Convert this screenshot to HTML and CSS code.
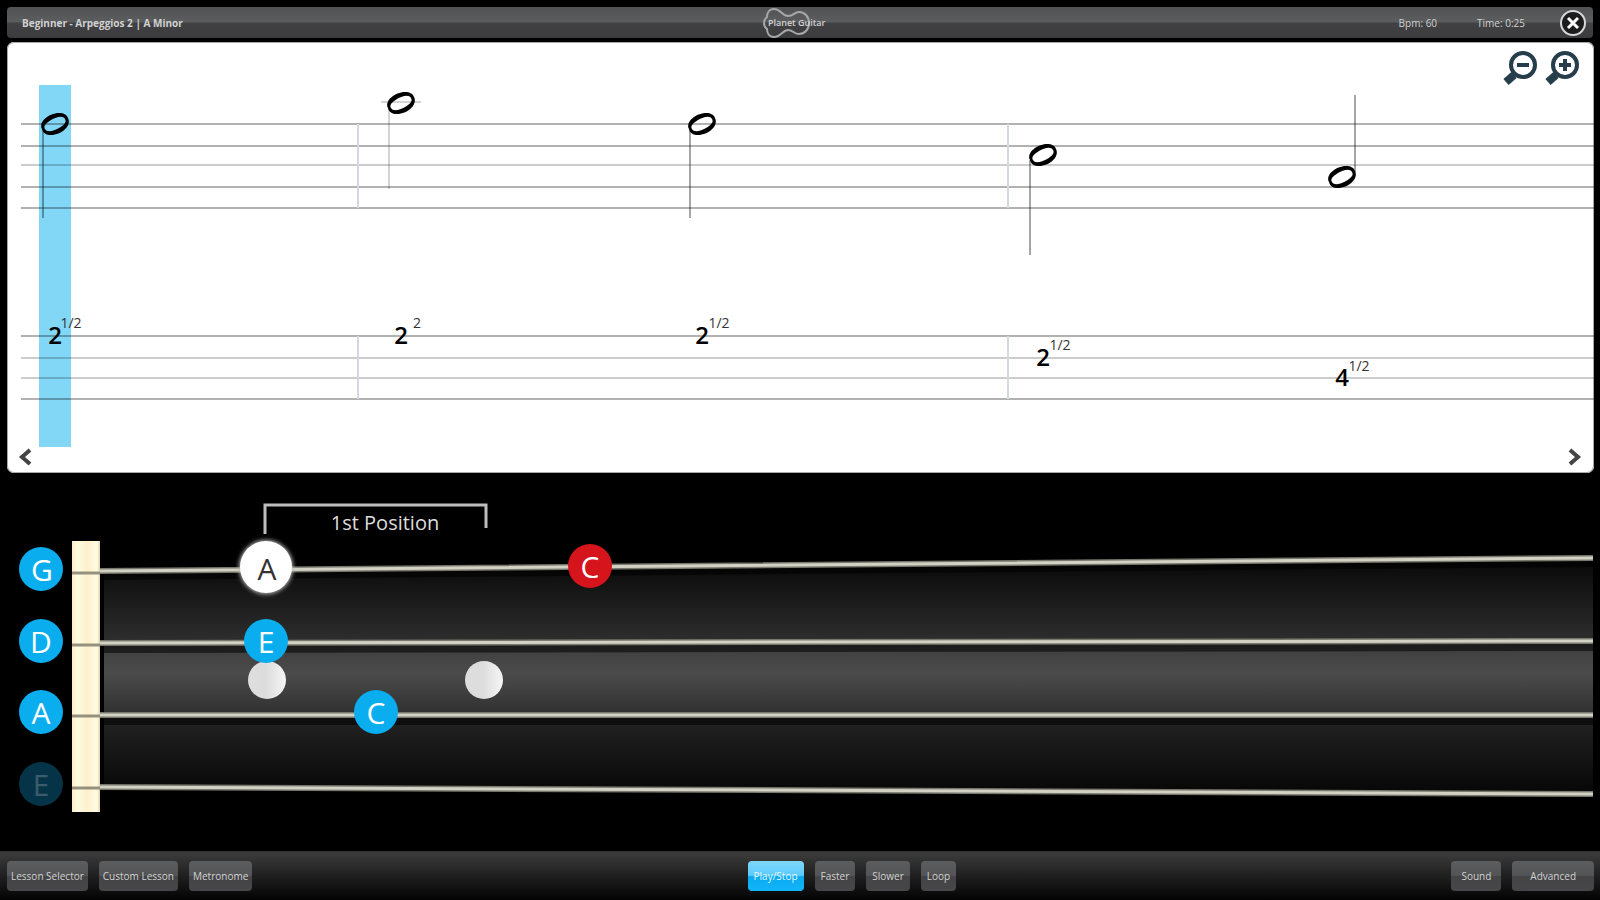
FILE: index.html
```html
<!DOCTYPE html>
<html lang="en">
<head>
<meta charset="utf-8">
<meta name="viewport" content="width=device-width, initial-scale=1">
<title>Arpeggios 2 | A Minor</title>
<link rel="stylesheet" href="styles.css">
</head>
<body>
<header class="topbar">
  <h1 class="title">Beginner - Arpeggios 2 | A Minor</h1>
  <div class="logo">
    <svg class="logo-body" viewBox="0 0 50 30" aria-hidden="true"><path d="M12 1C19 1 20 8 26 8S32 4 37 4C43 4 47 9 47 15S43 26 37 26C32 26 31 22 26 22S19 29 12 29C7 29 5 25 5 21C1 18 1 12 5 9C5 5 7 1 12 1Z"/></svg>
    <span class="logo-text">Planet Guitar</span>
  </div>
  <div class="status">
    <span>Bpm: 60</span>
    <span>Time: 0:25</span>
    <button class="close" type="button" aria-label="Close">
      <svg viewBox="0 0 28 28"><circle cx="14" cy="14" r="12"/><path d="M9 9L19 19M19 9L9 19"/></svg>
    </button>
  </div>
</header>

<main>
  <section class="score" aria-label="Score">
    <svg class="sheet" viewBox="7 42 1587 431">
      <defs>
        <path id="note" fill-rule="evenodd" d="M-13 5C-17 -2 -6 -11 4 -11C9 -11 12 -9 13 -6C17 2 6 11 -4 11C-9 11 -12 9 -13 5ZM-10 5C-8 9 -1 7 4 4C9 1 12 -2 10 -5C8 -9 1 -7 -4 -4C-9 -1 -12 2 -10 5Z"/>
      </defs>
      <rect class="cursor" x="39" y="85" width="32" height="362"/>
      <path class="line" d="M21 124H1594M21 146H1594M21 187H1594M21 208H1594M21 336H1594M21 399H1594"/>
      <path class="line light" d="M21 165H1594M21 358H1594M21 378H1594"/>
      <path class="bar" d="M358 124V208M1008 124V208M358 336V399M1008 336V399"/>
      <path class="stem" d="M43 128V218M690 128V218M1030 160V255M1355 95V172"/>
      <path class="stem faint" d="M389 108V189M381 102H421"/>
      <g class="notes">
        <use href="#note" x="55" y="124"/>
        <use href="#note" x="401" y="103"/>
        <use href="#note" x="702" y="124"/>
        <use href="#note" x="1043" y="155"/>
        <use href="#note" x="1342" y="177"/>
      </g>
      <g class="fret">
        <text x="55" y="344">2</text>
        <text x="401" y="344">2</text>
        <text x="702" y="344">2</text>
        <text x="1043" y="366">2</text>
        <text x="1342" y="386">4</text>
      </g>
      <g class="length">
        <text x="71" y="328">1/2</text>
        <text x="417" y="328">2</text>
        <text x="719" y="328">1/2</text>
        <text x="1060" y="350">1/2</text>
        <text x="1359" y="371">1/2</text>
      </g>
    </svg>
    <div class="zoom">
      <button type="button" aria-label="Zoom out"><svg viewBox="0 0 36 36"><circle cx="21" cy="15" r="12"/><path class="handle" d="M12 25L4 32"/><path class="sign" d="M15 15H27"/></svg></button>
      <button type="button" aria-label="Zoom in"><svg viewBox="0 0 36 36"><circle cx="21" cy="15" r="12"/><path class="handle" d="M12 25L4 32"/><path class="sign" d="M15 15H27M21 9V21"/></svg></button>
    </div>
    <button class="page prev" type="button" aria-label="Previous"><svg viewBox="0 0 16 20"><path d="M13 3L5 10L13 17"/></svg></button>
    <button class="page next" type="button" aria-label="Next"><svg viewBox="0 0 16 20"><path d="M3 3L11 10L3 17"/></svg></button>
  </section>

  <section class="neck" aria-label="Fretboard">
    <svg class="board" viewBox="0 473 1600 378">
      <defs>
        <linearGradient id="top" x2="0" y2="1"><stop stop-color="#080808"/><stop offset="1" stop-color="#2d2d2d"/></linearGradient>
        <linearGradient id="mid" x2="0" y2="1"><stop stop-color="#3c3c3c"/><stop offset=".45" stop-color="#4b4b4b"/><stop offset="1" stop-color="#303030"/></linearGradient>
        <linearGradient id="low" x2="0" y2="1"><stop stop-color="#252525"/><stop offset="1" stop-color="#070707"/></linearGradient>
        <linearGradient id="nut"><stop stop-color="#fdefc6"/><stop offset=".2" stop-color="#fffbe0"/><stop offset=".55" stop-color="#fdf0cd"/><stop offset=".9" stop-color="#fffce2"/><stop offset="1" stop-color="#d8cfae"/></linearGradient>
        <linearGradient id="pearl"><stop stop-color="#dedede"/><stop offset=".45" stop-color="#dcdcdc"/><stop offset="1" stop-color="#f5f5f5"/></linearGradient>
        <filter id="glow" x="-30%" y="-30%" width="160%" height="160%"><feGaussianBlur stdDeviation="2"/></filter>
      </defs>
      <path fill="url(#top)" d="M104 573L1593 560V640H104Z"/>
      <rect fill="url(#mid)" x="104" y="640" width="1489" height="74"/>
      <path fill="url(#low)" d="M104 714H1593V792L104 786Z"/>
      <path class="shade" d="M104 576L1593 563M104 649L1593 647M104 721H1593M104 789L1593 796"/>
      <rect fill="url(#nut)" x="72" y="541" width="28" height="271"/>
      <path class="anchor" d="M72 573H100M72 645H100M72 716H100M72 788H100"/>
      <path class="string-edge" d="M100 571L1593 558M100 643L1593 641M100 715H1593M100 787L1593 794"/>
      <path class="string" d="M100 571L1593 558M100 643L1593 641M100 715H1593M100 787L1593 794"/>
      <path class="bracket" d="M265 534V505H486V528"/>
      <text class="position" x="385" y="530">1st Position</text>
      <circle fill="url(#pearl)" cx="267" cy="680" r="19"/>
      <circle fill="url(#pearl)" cx="484" cy="680" r="19"/>
      <g class="blue">
        <circle cx="41" cy="569" r="22"/><circle cx="41" cy="641" r="22"/><circle cx="41" cy="712" r="22"/>
        <circle cx="266" cy="641" r="22"/><circle cx="376" cy="712" r="22"/>
      </g>
      <circle class="muted" cx="41" cy="784" r="22"/>
      <circle class="red" cx="590" cy="566" r="22"/>
      <circle class="halo" cx="266" cy="567" r="27" filter="url(#glow)"/>
      <circle class="active" cx="266" cy="567" r="26"/>
      <g class="name">
        <text x="42" y="581">G</text>
        <text x="41" y="653">D</text>
        <text x="41" y="724">A</text>
        <text class="dim" x="41" y="796">E</text>
        <text x="266" y="653">E</text>
        <text x="376" y="724">C</text>
        <text x="590" y="578">C</text>
        <text class="dark" x="267" y="580">A</text>
      </g>
    </svg>
  </section>
</main>

<footer class="toolbar">
  <div class="group lessons">
    <button type="button">Lesson Selector</button>
    <button type="button">Custom Lesson</button>
    <button type="button">Metronome</button>
  </div>
  <div class="group">
    <button class="primary" type="button">Play/Stop</button>
    <button type="button">Faster</button>
    <button type="button">Slower</button>
    <button type="button">Loop</button>
  </div>
  <div class="group">
    <button class="medium" type="button">Sound</button>
    <button class="wide" type="button">Advanced</button>
  </div>
</footer>
</body>
</html>
```

FILE: styles.css
```css
* { box-sizing: border-box; }

body {
  margin: 0;
  min-height: 100vh;
  display: flex;
  flex-direction: column;
  background: #000;
  color: #d2d2d2;
  font: 10px/16px "Open Sans", "Noto Sans", sans-serif;
}

button {
  font: inherit;
  color: inherit;
  border: 0;
  padding: 0;
  background: none;
  cursor: pointer;
}

svg { display: block; }

.topbar {
  display: flex;
  justify-content: space-between;
  align-items: center;
  height: 31px;
  margin: 7px 7px 4px;
  padding: 0 6px 0 15px;
  border-radius: 4px;
  background: linear-gradient(#505253, #5b5d5e 48%, #424244 52%, #3b3b3d);
}

.title { margin: 0; font-size: 10px; line-height: 16px; font-weight: 700; }

.logo { display: flex; align-items: center; padding-left: 6px; }
.logo-body { width: 50px; height: 30px; fill: none; stroke: #a5a7a8; stroke-width: 2; }
.logo-text { margin-left: -44px; font-size: 9px; font-weight: 600; }

.status { display: flex; align-items: center; gap: 40px; }
.close { margin-left: -6px; }
.close svg { width: 28px; height: 28px; fill: #1c1c1c; stroke: #d8d8d8; stroke-width: 2; }
.close path { stroke: #fff; stroke-width: 3; }

main { flex: 1; }

.score {
  position: relative;
  margin: 0 6px 0 7px;
  overflow: hidden;
  border-radius: 7px;
  background: #fff;
  box-shadow: inset 0 0 0 1px #a8a8a8;
}

.sheet { width: 100%; height: auto; }
.cursor { fill: #82d7f7; }
.line { fill: none; stroke: #000; stroke-opacity: .3; stroke-width: 2; }
.line.light { stroke-opacity: .2; }
.bar { stroke: #d3d8e4; stroke-width: 2; }
.stem { stroke: #000; stroke-opacity: .35; stroke-width: 2; }
.stem.faint { stroke-opacity: .17; }
.notes { fill: #000; }
.fret { font-size: 24px; font-weight: 600; fill: #000; text-anchor: middle; }
.length { font-size: 14px; fill: #333; text-anchor: middle; }

.zoom { position: absolute; top: 8px; right: 14px; display: flex; gap: 6px; }
.zoom svg { width: 36px; height: 36px; fill: none; stroke: #263d4b; stroke-width: 4; }
.zoom .handle { stroke-width: 8; }

.page { position: absolute; bottom: 6px; }
.page svg { width: 16px; height: 20px; fill: none; stroke: #444; stroke-width: 4; }
.prev { left: 10px; }
.next { right: 11px; }

.board { width: 100%; height: auto; }
.shade { stroke: #000; stroke-opacity: .55; stroke-width: 8; }
.anchor { stroke: #96917f; stroke-width: 3; }
.string-edge { stroke: #77776d; stroke-width: 6; }
.string { stroke: #d2d2c4; stroke-width: 3; }
.bracket { fill: none; stroke: #bdbdbd; stroke-width: 3; }
.position { font-size: 20px; fill: #dedede; text-anchor: middle; }
.blue { fill: #0aaeef; }
.muted { fill: #053347; }
.red { fill: #d6141b; }
.halo { fill: #bbb; }
.active { fill: #fff; }
.name { font-size: 30px; fill: #fff; text-anchor: middle; }
.name .dim { fill: #3b5c6b; }
.name .dark { fill: #333; }

.toolbar {
  display: flex;
  justify-content: space-between;
  padding: 10px 6px 9px 7px;
  background: linear-gradient(#333, #3a3a3a 6%, #202020 50%, #030303);
}

.group { display: flex; gap: 11px; }

.group button {
  height: 30px;
  padding: 0 6px;
  border-radius: 4px;
  background: linear-gradient(#5b5d5e, #525455 48%, #444446 52%, #47474a);
}

.lessons button { padding: 0 4px; }

.group .primary {
  color: #e4f6fe;
  background: linear-gradient(#7fd7fb, #5ccafa 48%, #0aaaf2 52%, #12b4f7);
}

.group .medium { padding: 0 10px; }
.group .wide { padding: 0 18px; }
```
